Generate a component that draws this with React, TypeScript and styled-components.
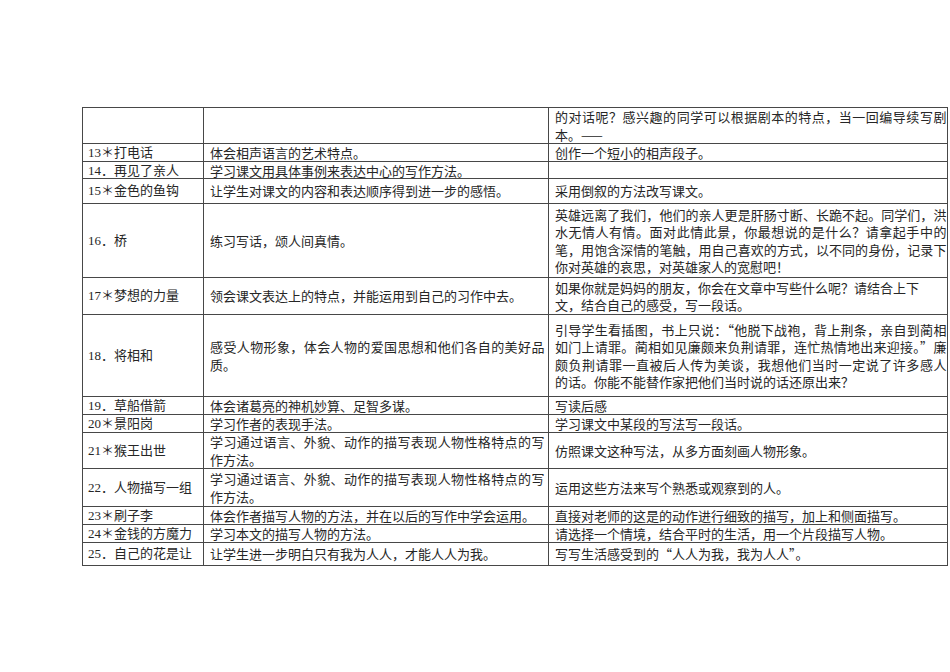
import styled, { createGlobalStyle } from "styled-components";

const GlobalStyle = createGlobalStyle`
  html, body {
    margin: 0;
    padding: 0;
    background: #ffffff;
  }
  body {
    font-family: "Noto Sans CJK SC", "Liberation Serif", sans-serif;
    color: #262626;
  }
`;

type Lesson = {
  h: number;
  no: string;
  goal: string[];
  task: string[];
  raggedTask?: boolean;
};

const lessons: Lesson[] = [
  {
    h: 36,
    no: "",
    goal: [],
    task: ["的对话呢？感兴趣的同学可以根据剧本的特点，当一回编导续写剧", "本。——"],
  },
  { h: 18, no: "13＊打电话", goal: ["体会相声语言的艺术特点。"], task: ["创作一个短小的相声段子。"] },
  { h: 17, no: "14．再见了亲人", goal: ["学习课文用具体事例来表达中心的写作方法。"], task: [] },
  {
    h: 25,
    no: "15＊金色的鱼钩",
    goal: ["让学生对课文的内容和表达顺序得到进一步的感悟。"],
    task: ["采用倒叙的方法改写课文。"],
  },
  {
    h: 74,
    no: "16．桥",
    goal: ["练习写话，颂人间真情。"],
    task: [
      "英雄远离了我们，他们的亲人更是肝肠寸断、长跪不起。同学们，洪",
      "水无情人有情。面对此情此景，你最想说的是什么？请拿起手中的",
      "笔，用饱含深情的笔触，用自己喜欢的方式，以不同的身份，记录下",
      "你对英雄的哀思，对英雄家人的宽慰吧！",
    ],
  },
  {
    h: 37,
    no: "17＊梦想的力量",
    goal: ["领会课文表达上的特点，并能运用到自己的习作中去。"],
    task: ["如果你就是妈妈的朋友，你会在文章中写些什么呢？请结合上下", "文，结合自己的感受，写一段话。"],
    raggedTask: true,
  },
  {
    h: 82,
    no: "18．将相和",
    goal: ["感受人物形象，体会人物的爱国思想和他们各自的美好品", "质。"],
    task: [
      "引导学生看插图，书上只说：“他脱下战袍，背上荆条，亲自到蔺相",
      "如门上请罪。蔺相如见廉颇来负荆请罪，连忙热情地出来迎接。”廉",
      "颇负荆请罪一直被后人传为美谈，我想他们当时一定说了许多感人",
      "的话。你能不能替作家把他们当时说的话还原出来？",
    ],
  },
  { h: 18, no: "19．草船借箭", goal: ["体会诸葛亮的神机妙算、足智多谋。"], task: ["写读后感"] },
  { h: 18, no: "20＊景阳岗", goal: ["学习作者的表现手法。"], task: ["学习课文中某段的写法写一段话。"] },
  {
    h: 36,
    no: "21＊猴王出世",
    goal: ["学习通过语言、外貌、动作的描写表现人物性格特点的写", "作方法。"],
    task: ["仿照课文这种写法，从多方面刻画人物形象。"],
  },
  {
    h: 38,
    no: "22．人物描写一组",
    goal: ["学习通过语言、外貌、动作的描写表现人物性格特点的写", "作方法。"],
    task: ["运用这些方法来写个熟悉或观察到的人。"],
  },
  {
    h: 18,
    no: "23＊刷子李",
    goal: ["体会作者描写人物的方法，并在以后的写作中学会运用。"],
    task: ["直接对老师的这是的动作进行细致的描写，加上和侧面描写。"],
  },
  {
    h: 18,
    no: "24＊金钱的方魔力",
    goal: ["学习本文的描写人物的方法。"],
    task: ["请选择一个情境，结合平时的生活，用一个片段描写人物。"],
  },
  {
    h: 23,
    no: "25．自己的花是让",
    goal: ["让学生进一步明白只有我为人人，才能人人为我。"],
    task: ["写写生活感受到的“人人为我，我为人人”。"],
  },
];

const Page = styled.div`
  padding: 107px 0 40px 82px;
`;

const Table = styled.div`
  display: flex;
  flex-direction: column;
  width: 865px;
  border-top: 1px solid #474747;
  border-right: 1px solid #474747;
`;

const Row = styled.div<{ $h: number }>`
  display: grid;
  grid-template-columns: 121px 345px 398px;
  height: ${(p) => p.$h}px;
  border-bottom: 1px solid #474747;
  box-sizing: border-box;
`;

const Cell = styled.div<{ $padL: number; $padR: number; $serif?: boolean }>`
  display: flex;
  flex-direction: column;
  justify-content: center;
  box-sizing: border-box;
  border-left: 1px solid #474747;
  padding: 0 ${(p) => p.$padR}px 0 ${(p) => p.$padL}px;
  font-family: ${(p) =>
    p.$serif
      ? `"Liberation Serif", "Noto Sans CJK SC", serif`
      : `"Noto Sans CJK SC", "Liberation Serif", sans-serif`};
  font-size: 13px;
  line-height: 17.5px;
`;

const Line = styled.div<{ $fill?: boolean }>`
  text-align: ${(p) => (p.$fill ? "justify" : "left")};
  text-align-last: ${(p) => (p.$fill ? "justify" : "left")};
  letter-spacing: ${(p) => (p.$fill ? "-0.4px" : "0")};
`;

function Lines({ lines, ragged }: { lines: string[]; ragged?: boolean }) {
  return (
    <>
      {lines.map((t, i) => (
        <Line key={i} $fill={!ragged && i < lines.length - 1}>
          {t}
        </Line>
      ))}
    </>
  );
}

export default function App() {
  return (
    <Page>
      <GlobalStyle />
      <Table>
        {lessons.map((l, i) => (
          <Row key={i} $h={l.h}>
            <Cell $padL={5} $padR={2} $serif>
              <Line>{l.no}</Line>
            </Cell>
            <Cell $padL={6} $padR={4}>
              <Lines lines={l.goal} />
            </Cell>
            <Cell $padL={6} $padR={0}>
              <Lines lines={l.task} ragged={l.raggedTask} />
            </Cell>
          </Row>
        ))}
      </Table>
    </Page>
  );
}
